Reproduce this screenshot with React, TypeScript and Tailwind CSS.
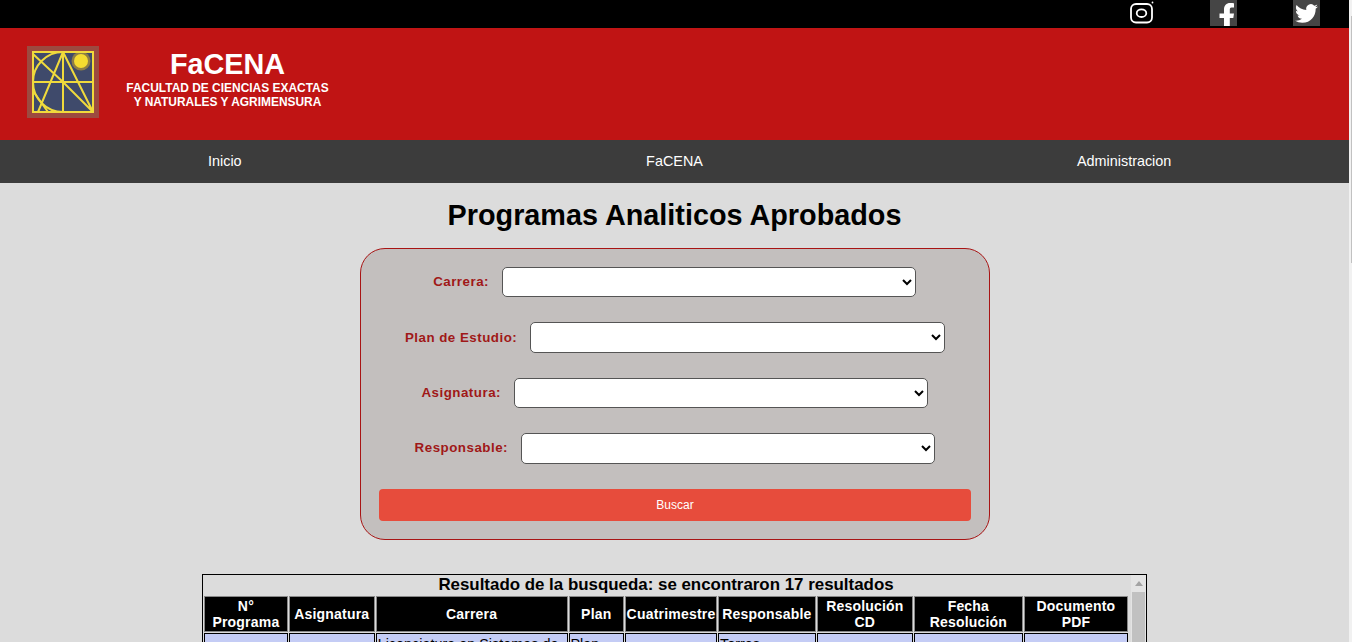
import { useState } from "react";

const columns = [
  { label: "N° Programa", w: "w-[83px]" },
  { label: "Asignatura", w: "w-[85px]" },
  { label: "Carrera", w: "w-[190px]" },
  { label: "Plan", w: "w-[55px]" },
  { label: "Cuatrimestre", w: "w-[91px]" },
  { label: "Responsable", w: "w-[97px]" },
  { label: "Resolución CD", w: "w-[95px]" },
  { label: "Fecha Resolución", w: "w-[108px]" },
  { label: "Documento PDF", w: "w-[103px]" },
];

function Logo() {
  return (
    <div className="w-[72px] h-[72px] bg-[#9c4a40] p-[5px]">
      <svg viewBox="0 0 62 62" className="w-[62px] h-[62px] block blur-[0.3px]">
        <rect x="0" y="0" width="62" height="62" fill="#3f4a6b" />
        <circle cx="49" cy="10" r="9.500" fill="#8f7f45" />
        <circle cx="49" cy="10" r="7" fill="#f5dc30" />
        <g fill="none" stroke="#f0da3c" strokeWidth="2">
          <rect x="1" y="1" width="60" height="60" />
          <path d="M1 31H61M31 1V61" />
          <path d="M31 1A30 30 0 0 0 31 61" />
          <path d="M1 3L31 31M31 1L6 61M31 1L61 61M31 31L61 61M1 40L16 61" />
        </g>
      </svg>
    </div>
  );
}

function Instagram() {
  return (
    <svg viewBox="0 0 26 26" className="w-[26px] h-[26px]" fill="none" stroke="#fff" strokeWidth="1.800">
      <rect x="2" y="4" width="21" height="18.500" rx="5" />
      <ellipse cx="12.500" cy="13.200" rx="4.800" ry="3.800" />
      <circle cx="23.500" cy="2.500" r="0.900" fill="#fff" stroke="none" />
    </svg>
  );
}

function Facebook() {
  return (
    <div className="w-[27px] h-[26px] bg-[#454545] flex items-end justify-center overflow-hidden">
      <svg viewBox="0 0 27 26" className="w-[27px] h-[26px]" fill="#fff">
        <path d="M14 26V18H9.500V13.500H14V9.500C14 5.500 16.500 3 20 3C21.800 3 23.500 3.200 24 3.300V7.500H21.500C20 7.500 19.800 8.500 19.800 9.800V13.500H24L23.300 18H19.800V26Z" />
      </svg>
    </div>
  );
}

function Twitter() {
  return (
    <div className="w-[27px] h-[26px] bg-[#454545] flex items-center justify-center">
      <svg viewBox="0 0 24 24" className="w-[23px] h-[23px]" fill="#fff">
        <path d="M23.950 4.570a10 10 0 0 1-2.820.770 4.960 4.960 0 0 0 2.160-2.720c-.950.550-2 .950-3.130 1.180a4.920 4.920 0 0 0-8.380 4.480C7.690 8.090 4.070 6.130 1.640 3.160a4.820 4.820 0 0 0-.660 2.470c0 1.710.870 3.210 2.190 4.100a4.900 4.900 0 0 1-2.230-.610v.060a4.920 4.920 0 0 0 3.950 4.830 5 5 0 0 1-2.210.080 4.940 4.940 0 0 0 4.600 3.420A9.870 9.870 0 0 1 0 19.540a14 14 0 0 0 7.560 2.210c9.050 0 14-7.500 14-13.980 0-.210 0-.420-.020-.630a9.940 9.940 0 0 0 2.460-2.550z" />
      </svg>
    </div>
  );
}

function Field({ label, labelW }: { label: string; labelW: string }) {
  const [value, setValue] = useState("");
  return (
    <div className="flex items-center">
      <label className={`${labelW} text-right text-[13.33px] font-bold tracking-[0.5px] text-[#a01818]`}>{label}</label>
      <select
        value={value}
        onChange={(e) => setValue(e.target.value)}
        className="ml-[13px] w-[414.4px] h-[30.4px] bg-white border border-[#555] rounded-[5px] text-[14px] appearance-auto"
      >
        <option value=""></option>
      </select>
    </div>
  );
}

export default function App() {
  return (
    <div className="h-[642px] overflow-hidden flex bg-[#f1f1f1] font-['Liberation_Sans',Arial,sans-serif] text-black">
      <div className="w-[1349px] shrink-0 bg-[#dcdcdc]">
        <div className="h-[28px] bg-black flex">
          <div className="ml-[1129px] w-[26px]"><Instagram /></div>
          <div className="ml-[55px]"><Facebook /></div>
          <div className="ml-[56px]"><Twitter /></div>
        </div>
        <div className="h-[112px] bg-[#c01414] flex pl-[27px] pt-[18px]">
          <Logo />
          <div className="ml-[27px] w-[203px] text-center text-white font-bold">
            <div className="text-[28.8px] leading-[36px]">FaCENA</div>
            <div className="text-[11.95px] leading-[14px] -mt-[1px]">FACULTAD DE CIENCIAS EXACTAS</div>
            <div className="text-[11.95px] leading-[14px]">Y NATURALES Y AGRIMENSURA</div>
          </div>
        </div>
        <nav className="h-[43px] bg-[#3c3c3c] grid grid-cols-3 items-center text-white text-[14.4px] text-center">
          <a>Inicio</a>
          <a>FaCENA</a>
          <a>Administracion</a>
        </nav>
        <h1 className="mt-[14px] text-center text-[28.8px] leading-[36px] font-bold">Programas Analiticos Aprobados</h1>
        <form className="mt-[15px] ml-[360px] w-[630px] h-[292px] bg-[#c3bfbe] border border-[#a81414] rounded-[25px] px-[18px] pt-[18px]">
          <div className="flex flex-col gap-[25px]">
            <Field label="Carrera:" labelW="w-[110px]" />
            <Field label="Plan de Estudio:" labelW="w-[138.3px]" />
            <Field label="Asignatura:" labelW="w-[122px]" />
            <Field label="Responsable:" labelW="w-[129px]" />
          </div>
          <button type="button" className="mt-[25px] w-full h-[32px] bg-[#e74c3c] rounded-[4px] text-white text-[12px]">Buscar</button>
        </form>
        <section className="mt-[34px] ml-[202px] w-[945px] h-[200px] border border-black flex overflow-hidden">
          <div className="flex-1 min-w-0">
            <div className="pr-[2px] text-center text-[16.9px] leading-[20px] font-bold">Resultado de la busqueda: se encontraron 17 resultados</div>
            <table className="border-separate border-spacing-[1px] table-fixed w-[926px] text-[14.4px]">
              <thead>
                <tr>
                  {columns.map((c) => (
                    <th key={c.label} className={`${c.w} h-[36px] bg-black text-white text-center font-bold text-[14px] leading-[16px] border border-[#888] p-0 tracking-[0.2px]`}>{c.label}</th>
                  ))}
                </tr>
              </thead>
              <tbody>
                <tr className="align-top">
                  <td className="bg-[#c4ccf5] border border-black" />
                  <td className="bg-[#c4ccf5] border border-black" />
                  <td className="bg-[#c4ccf5] border border-black px-[1px] pt-[2px] leading-[17px]">Licenciatura en Sistemas de</td>
                  <td className="bg-[#c4ccf5] border border-black px-[1px] pt-[2px] leading-[17px]">Plan</td>
                  <td className="bg-[#c4ccf5] border border-black" />
                  <td className="bg-[#c4ccf5] border border-black px-[1px] pt-[2px] leading-[17px]">Torres</td>
                  <td className="bg-[#c4ccf5] border border-black" />
                  <td className="bg-[#c4ccf5] border border-black" />
                  <td className="bg-[#c4ccf5] border border-black" />
                </tr>
              </tbody>
            </table>
          </div>
          <div className="w-[15px] bg-[#e4e4e4] flex flex-col shrink-0">
            <div className="h-[17px] flex items-center justify-center">
              <div className="w-0 h-0 border-x-[4px] border-x-transparent border-b-[5px] border-b-[#a3a3a3]" />
            </div>
            <div className="flex-1 mx-[1px] bg-[#c1c1c1]" />
          </div>
        </section>
      </div>
      <div className="flex-1 pt-[16px] pl-[2px]">
        <div className="w-[1px] h-[247px] bg-[#c1c1c1]" />
      </div>
    </div>
  );
}
